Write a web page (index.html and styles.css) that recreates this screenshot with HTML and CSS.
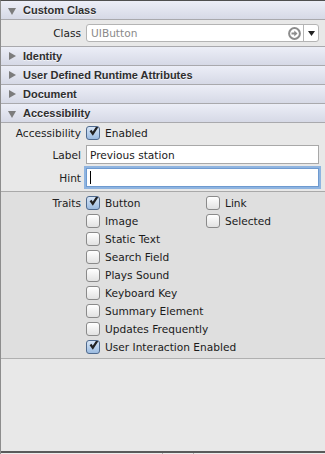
FILE: index.html
```html
<!DOCTYPE html>
<html lang="en">
  <head>
    <meta charset="UTF-8" />
    <title>Identity Inspector</title>
    <link rel="stylesheet" href="styles.css">
  </head>
  <body>
    <div class="panel">
      <div class="head open">Custom Class</div>
      <div class="row class-row">
        <span class="lbl">Class</span>
        <div class="combo">
          <span class="combo-text">UIButton</span>
          <svg class="go" width="13" height="13" viewBox="0 0 13 13">
            <circle cx="6.5" cy="6.5" r="5.4" fill="none" stroke="#8c8c8c" stroke-width="2" />
            <path d="M3.5 5.6h2.8v-2.2l3.2 3.1-3.2 3.1v-2.2h-2.8z" fill="#8c8c8c" />
          </svg>
          <span class="drop"><svg width="7" height="5" viewBox="0 0 7 5"><path d="M0 0h7l-3.5 5z" fill="#222" /></svg></span>
        </div>
      </div>
      <div class="head">Identity</div>
      <div class="head">User Defined Runtime Attributes</div>
      <div class="head">Document</div>
      <div class="head open">Accessibility</div>

      <div class="form">
        <span class="lbl">Accessibility</span>
        <label class="check on">Enabled</label>
        <span class="lbl">Label</span>
        <div class="field">Previous station</div>
        <span class="lbl">Hint</span>
        <div class="field focus"><span class="caret"></span></div>
      </div>

      <div class="traits">
        <span class="lbl">Traits</span>
        <label class="check on">Button</label>
        <label class="check">Link</label>
        <span></span>
        <label class="check">Image</label>
        <label class="check">Selected</label>
        <span></span>
        <label class="check wide">Static Text</label>
        <span></span>
        <label class="check wide">Search Field</label>
        <span></span>
        <label class="check wide">Plays Sound</label>
        <span></span>
        <label class="check wide">Keyboard Key</label>
        <span></span>
        <label class="check wide">Summary Element</label>
        <span></span>
        <label class="check wide">Updates Frequently</label>
        <span></span>
        <label class="check wide on">User Interaction Enabled</label>
      </div>

      <div class="empty"></div>
      <div class="bottom">
        <span class="seg"></span>
        <span class="seg small"></span>
        <span class="seg rest"></span>
      </div>
    </div>
  </body>
</html>
```

FILE: styles.css
```css
* {
  box-sizing: border-box;
}

html,
body {
  margin: 0;
  height: 100%;
}

body {
  font-family: "DejaVu Sans", "Liberation Sans", sans-serif;
  font-size: 10.6px;
  color: #1a1a1a;
  background-color: #e8e8e8;
}

.panel {
  display: flex;
  flex-direction: column;
  height: 454px;
  border-top: 1px solid #4f4f4f;
  border-left: 1px solid #8d8d8d;
}

.head {
  height: 19px;
  padding-left: 22px;
  display: flex;
  align-items: center;
  position: relative;
  font-family: "Liberation Sans", "DejaVu Sans", sans-serif;
  font-weight: bold;
  font-size: 11px;
  color: #2e2e2e;
  text-shadow: 0 1px 0 rgba(255, 255, 255, 0.7);
  background: linear-gradient(#eceef7, #d6d9e6);
  border-bottom: 1px solid #a9a9ad;
}

.head::before {
  content: "";
  position: absolute;
  left: 8px;
  top: 5px;
  border-style: solid;
  border-width: 4px 0 4px 7px;
  border-color: transparent transparent transparent #7c7c7c;
}

.head.open::before {
  left: 7px;
  top: 7px;
  border-width: 7px 4px 0 4px;
  border-color: #7c7c7c transparent transparent transparent;
}

.lbl {
  text-align: right;
  color: #222;
}

.row {
  display: grid;
  grid-template-columns: 80px 1fr;
  column-gap: 5px;
  align-items: center;
}

.class-row {
  height: 27px;
  padding-right: 6px;
  border-bottom: 1px solid #a9a9ad;
}

.combo {
  display: flex;
  align-items: center;
  height: 18px;
  background-color: white;
  border: 1px solid #b4b4b4;
  border-radius: 3px;
}

.combo-text {
  flex: 1;
  padding-left: 4px;
  color: #8a8a8a;
}

.go {
  margin-right: 2px;
}

.drop {
  width: 15px;
  height: 100%;
  display: flex;
  align-items: center;
  justify-content: center;
  border-left: 1px solid #b4b4b4;
}

.form {
  display: grid;
  grid-template-columns: 80px 1fr;
  column-gap: 5px;
  row-gap: 4px;
  align-items: center;
  padding: 2px 6px 4px 0;
  border-bottom: 1px solid #a9a9a9;
}

.form .check {
  height: 16px;
}

.field {
  height: 19px;
  padding-left: 3px;
  display: flex;
  align-items: center;
  background-color: white;
  border: 1px solid #a8a8a8;
}

.field.focus {
  border: 1px solid #6e9ad0;
  box-shadow: 0 0 0 2px #8fb4e0;
}

.caret {
  width: 1px;
  height: 13px;
  background-color: #000;
}

.check {
  display: flex;
  align-items: center;
  gap: 5px;
  height: 18px;
  color: #1a1a1a;
}

.check::before {
  content: "";
  width: 12px;
  height: 12px;
  flex: none;
  border: 1px solid #8a8a8a;
  border-radius: 3px;
  background: linear-gradient(#ffffff, #e2e2e2);
}

.check.on::before {
  border-color: #4f6a8e;
  background: url("data:image/svg+xml,%3Csvg xmlns='http://www.w3.org/2000/svg' width='12' height='12'%3E%3Cpath d='M2.5 5.5l2.3 3.2L10.5 0' fill='none' stroke='%23222' stroke-width='2.2'/%3E%3C/svg%3E") no-repeat 1px -2px,
    linear-gradient(#d8e6f6, #9bbbe0);
}

.traits {
  display: grid;
  grid-template-columns: 80px 115px 1fr;
  column-gap: 5px;
  align-items: center;
  padding: 2px 0 2px;
  background-color: #dfdfdf;
  border-bottom: 1px solid #b0b0b0;
}

.traits .wide {
  grid-column: 2 / 4;
}

.empty {
  flex: 1;
}

.bottom {
  display: flex;
  height: 3px;
  border-top: 2px solid #5a5a5a;
  background-color: #ececec;
}

.seg {
  width: 162px;
  border-right: 1px solid #b0b0b0;
}

.seg.small {
  width: 31px;
}

.seg.rest {
  flex: 1;
  border-right: none;
}
```
